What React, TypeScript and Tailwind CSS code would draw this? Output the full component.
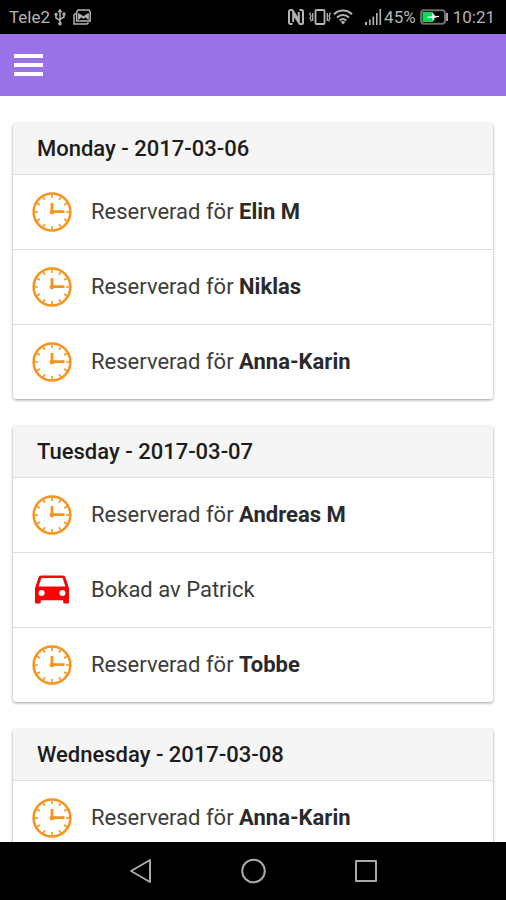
type Booking = {
  kind: 'reserved' | 'booked'
  name: string
}

type Day = {
  title: string
  bookings: Booking[]
}

const days: Day[] = [
  {
    title: 'Monday - 2017-03-06',
    bookings: [
      { kind: 'reserved', name: 'Elin M' },
      { kind: 'reserved', name: 'Niklas' },
      { kind: 'reserved', name: 'Anna-Karin' },
    ],
  },
  {
    title: 'Tuesday - 2017-03-07',
    bookings: [
      { kind: 'reserved', name: 'Andreas M' },
      { kind: 'booked', name: 'Patrick' },
      { kind: 'reserved', name: 'Tobbe' },
    ],
  },
  {
    title: 'Wednesday - 2017-03-08',
    bookings: [{ kind: 'reserved', name: 'Anna-Karin' }],
  },
]

const ticks = [0, 30, 60, 90, 120, 150, 180, 210, 240, 270, 300, 330]

function ClockIcon() {
  return (
    <svg viewBox="0 0 40 40" className="w-10 h-10" fill="none" stroke="#f7941e" aria-hidden="true">
      <circle cx="20" cy="20" r="18.4" strokeWidth="2.5" />
      {ticks.map((angle) => (
        <path key={angle} d="M20 2.5V6" strokeWidth="1.6" transform={`rotate(${angle} 20 20)`} />
      ))}
      <path d="M20 11V19.6H32.5" strokeWidth="2.8" />
      <circle cx="20" cy="20" r="2.4" fill="#f7941e" stroke="none" />
    </svg>
  )
}

function CarIcon() {
  return (
    <svg viewBox="0 0 40 40" className="w-10 h-10" fill="#fb0207" aria-hidden="true">
      <path
        fillRule="evenodd"
        d="M9.6 5.6h20.8c1.6 0 2.7.8 3.2 2.2L37 18.2V32c0 1-.6 1.6-1.6 1.6h-2.6c-1 0-1.6-.6-1.6-1.6v-1.800H8.800V32c0 1-.6 1.6-1.6 1.6H4.6c-1 0-1.6-.6-1.6-1.6V18.2L6.4 7.8c.5-1.4 1.6-2.2 3.2-2.2ZM9.4 8 6.6 16.6h26.8L30.6 8H9.4Zm.2 12a3 3 0 1 0 0 6 3 3 0 0 0 0-6Zm20.8 0a3 3 0 1 0 0 6 3 3 0 0 0 0-6Z"
      />
    </svg>
  )
}

function StatusBar() {
  return (
    <div className="flex h-[34px] shrink-0 items-center justify-between bg-black pl-[9px] pr-[11px] text-[17px] leading-5 text-[#b4b4b4]">
      <div className="flex items-center">
        <span>Tele2</span>
        {/* USB */}
        <svg viewBox="0 0 12 18" className="ml-1 h-[18px] w-3" fill="none" stroke="currentColor" strokeWidth="1.5" aria-hidden="true">
          <path d="M6 3v12M6 12.4 2 10V7M6 11.4l4-2.4V6" />
          <path d="M6 .4 8.4 4.2H3.6ZM.6 5h2.8v2.8H.6ZM8.6 4.6h2.8v2.8H8.6Z" fill="currentColor" stroke="none" />
          <circle cx="6" cy="15.8" r="1.8" fill="currentColor" stroke="none" />
        </svg>
        {/* Gallery */}
        <svg viewBox="0 0 18 16" className="ml-[7px] h-4 w-[18px]" fill="none" stroke="currentColor" strokeWidth="1.5" aria-hidden="true">
          <path d="M3.6 3.2 5 1h11l1.2 2.2V12H3.6Z" />
          <path d="M2.6 4.4 1 6v9h13l1.6-1.5" />
          <path d="M5.4 4.5v6l3-2.500 2 1.4 2-1.4 3 2.5v-6l-5 3Z" fill="currentColor" strokeWidth=".8" />
        </svg>
      </div>
      <div className="flex items-center">
        {/* NFC */}
        <svg viewBox="0 0 16 16" className="h-4 w-4" fill="none" stroke="currentColor" strokeWidth="2" aria-hidden="true">
          <path d="M4.5 15H2.6C1.6 15 1 14.4 1 13.4V2.6C1 1.6 1.6 1 2.6 1h1.6l6.6 10V3" />
          <path d="M11.5 1h1.9c1 0 1.6.6 1.6 1.6v10.8c0 1-.6 1.6-1.6 1.6h-1.6L5.2 5v8" />
        </svg>
        {/* Vibrate */}
        <svg viewBox="0 0 22 16" className="ml-[5px] h-4 w-[22px]" fill="none" stroke="currentColor" strokeWidth="1.8" aria-hidden="true">
          <rect x="6.5" y="1" width="9" height="14" rx="1" />
          <path d="M1 3.500v2l1 1.500-1 2 1 1.500v2M3.700 4v8M21 3.500v2L20 7l1 2-1 1.500v2M18.300 4v8" strokeWidth="1.3" />
        </svg>
        {/* Wi-Fi */}
        <svg viewBox="0 0 20 16" className="ml-[2px] h-4 w-5" fill="none" stroke="currentColor" strokeWidth="2" aria-hidden="true">
          <path d="M1 5.200c5.200-4.800 12.800-4.800 18 0M4 8.400c3.500-3.200 8.500-3.200 12 0M6.800 11.400c2-1.800 4.400-1.800 6.400 0" />
          <path d="m10 15.600-2.400-2.800c1.500-1.200 3.300-1.200 4.800 0Z" fill="currentColor" stroke="none" />
        </svg>
        {/* Signal */}
        <svg viewBox="0 0 17 16" className="ml-3 h-4 w-[17px]" fill="currentColor" aria-hidden="true">
          <path d="M0 13h2v3H0zM4 10.500h1.600V16H4zM7.500 7.500h1.600V16H7.500zM11 4h1.600v12H11zM14.500 0h1.600v16h-1.600z" />
        </svg>
        <span className="ml-[2px]">45%</span>
        {/* Battery */}
        <svg viewBox="0 0 29 16" className="ml-1 h-4 w-[29px]" fill="none" aria-hidden="true">
          <rect x="1" y="1.300" width="24" height="13.400" rx="3" stroke="#6c6c6c" strokeWidth="2" />
          <path d="M27 4v8" stroke="#b4b4b4" strokeWidth="1.8" />
          <path d="M2.500 3H13v10H2.500Z" fill="#12d657" />
          <path d="M7.500 8.300l5-.8.400-3L15 7.400h4l-4.800 1-.6 3L12 8.600Z" fill="#fff" stroke="#fff" strokeWidth=".8" />
        </svg>
        <span className="ml-1">10:21</span>
      </div>
    </div>
  )
}

function AppBar() {
  return (
    <header className="flex h-[62px] shrink-0 items-center bg-[#9a72e7] px-[14px]">
      <button type="button" aria-label="Menu" className="flex w-[29px] flex-col gap-[5px]">
        <span className="h-1 bg-white"></span>
        <span className="h-1 bg-white"></span>
        <span className="h-1 bg-white"></span>
      </button>
    </header>
  )
}

function DayCard({ day }: { day: Day }) {
  return (
    <section className="shrink-0 overflow-hidden rounded-[3px] bg-white shadow-[0_1px_3px_rgba(0,0,0,0.4)]">
      <h2 className="flex h-[52px] items-center border-b border-[#dedede] bg-[#f5f5f5] px-6 text-[22px] font-medium text-[#1c1c1c]">
        {day.title}
      </h2>
      <ul className="divide-y divide-[#dedede]">
        {day.bookings.map((booking) => (
          <li key={booking.name} className="flex items-center gap-[19px] px-[19px] py-[17px]">
            {booking.kind === 'reserved' ? <ClockIcon /> : <CarIcon />}
            {booking.kind === 'reserved' ? (
              <p>
                Reserverad för <b className="font-bold text-[#2a2a2a]">{booking.name}</b>
              </p>
            ) : (
              <p>Bokad av {booking.name}</p>
            )}
          </li>
        ))}
      </ul>
    </section>
  )
}

function NavigationBar() {
  return (
    <nav className="flex h-[58px] shrink-0 items-center justify-center gap-[88px] bg-black text-[#aaa]">
      <button type="button" aria-label="Back">
        <svg viewBox="0 0 24 26" className="h-[26px] w-6" fill="none" stroke="currentColor" strokeWidth="2" strokeLinejoin="round">
          <path d="M22 2v22L3 13Z" />
        </svg>
      </button>
      <button type="button" aria-label="Home">
        <svg viewBox="0 0 26 26" className="h-[26px] w-[26px]" fill="none" stroke="currentColor" strokeWidth="2">
          <circle cx="13.5" cy="13" r="11.3" />
        </svg>
      </button>
      <button type="button" aria-label="Recent apps">
        <svg viewBox="0 0 24 26" className="h-[26px] w-6" fill="none" stroke="currentColor" strokeWidth="2" strokeLinejoin="round">
          <rect x="2" y="3" width="20" height="20" />
        </svg>
      </button>
    </nav>
  )
}

export default function App() {
  return (
    <div className="flex h-screen flex-col bg-white font-[Roboto,sans-serif]">
      <StatusBar />
      <AppBar />
      <main className="flex min-h-0 flex-1 flex-col gap-[27px] overflow-hidden px-[13px] pt-[27px] text-[22px] leading-7 text-[#3c3c3c]">
        {days.map((day) => (
          <DayCard key={day.title} day={day} />
        ))}
      </main>
      <NavigationBar />
    </div>
  )
}
